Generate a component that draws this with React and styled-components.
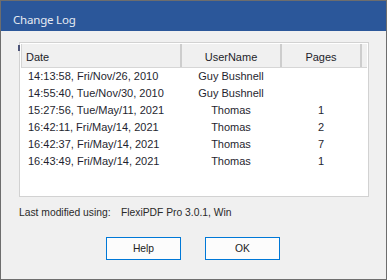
import React from "react";
import styled, { createGlobalStyle } from "styled-components";

const Global = createGlobalStyle`
  html, body { margin: 0; padding: 0; background: #f0f0f0; }
  body { font-family: "Liberation Sans", Arial, sans-serif; }
  * { box-sizing: border-box; }
`;

const Window = styled.div`
  width: 387px;
  height: 280px;
  border: 1px solid #6d6d6d;
  background: #f0f0f0;
  display: flex;
  flex-direction: column;
`;

const TitleBar = styled.div`
  height: 30px;
  flex: none;
  background: #2b579a;
  color: #e6ebf3;
  font-family: "Segoe UI", "Noto Sans", sans-serif;
  font-size: 11.5px;
  letter-spacing: -0.2px;
  line-height: 21px;
  padding: 8px 0 0 12px;
`;

const Body = styled.div`
  padding: 11px 17px 0 18px;
  display: flex;
  flex-direction: column;
`;

const ListBox = styled.div`
  position: relative;
  width: 350px;
  height: 155px;
  border: 1px solid #d2d2d2;
  background: #ffffff;
  padding: 1px;
`;

const FocusMark = styled.span`
  position: absolute;
  left: -2px;
  top: 2px;
  width: 2px;
  height: 6px;
  background: #4d5478;
`;

const HeaderRow = styled.div`
  height: 24px;
  display: grid;
  grid-template-columns: 160px 100px 80px 1fr;
  background: #f0f0f0;
  border-left: 1px solid #d4d4d4;
  border-bottom: 1px solid #d6d6d6;
`;

const HeaderCell = styled.div`
  border-right: ${(p) => (p.$last ? "none" : "2px solid #cdcdcd")};
  padding: 3px 4px 0;
  line-height: 20px;
  font-size: 11px;
  color: #1e1e2a;
  text-align: ${(p) => (p.$center ? "center" : "left")};
  white-space: nowrap;
`;

const Row = styled.div`
  display: grid;
  grid-template-columns: 160px 100px 80px;
  padding-left: 1px;
  height: 17px;
  line-height: 17px;
  font-size: 11px;
  color: #1f1f30;
`;

const Cell = styled.div`
  white-space: nowrap;
  text-align: ${(p) => (p.$center ? "center" : "left")};
  padding-left: ${(p) => (p.$center ? "0" : "6px")};
  padding-right: ${(p) => (p.$center ? "2px" : "0")};
`;

const InfoRow = styled.div`
  margin-top: 9px;
  display: grid;
  grid-template-columns: 102px auto;
  font-size: 10.3px;
  line-height: 14px;
  color: #2a2a2a;
`;

const ButtonRow = styled.div`
  margin-top: 17px;
  padding-right: 2px;
  display: flex;
  justify-content: center;
  gap: 24px;
`;

const Button = styled.button`
  width: 75px;
  height: 23px;
  border: 1px solid #0078d7;
  background: #fcfcfc;
  font-family: "Liberation Sans", Arial, sans-serif;
  font-size: 10.3px;
  color: #222;
  padding: 0;
  margin: 0;
  border-radius: 0;
`;

const rows = [
  ["14:13:58, Fri/Nov/26, 2010", "Guy Bushnell", ""],
  ["14:55:40, Tue/Nov/30, 2010", "Guy Bushnell", ""],
  ["15:27:56, Tue/May/11, 2021", "Thomas", "1"],
  ["16:42:11, Fri/May/14, 2021", "Thomas", "2"],
  ["16:42:37, Fri/May/14, 2021", "Thomas", "7"],
  ["16:43:49, Fri/May/14, 2021", "Thomas", "1"],
];

export default function App() {
  return (
    <>
      <Global />
      <Window>
        <TitleBar>Change Log</TitleBar>
        <Body>
          <ListBox>
            <FocusMark />
            <HeaderRow>
              <HeaderCell>Date</HeaderCell>
              <HeaderCell $center>UserName</HeaderCell>
              <HeaderCell $center>Pages</HeaderCell>
              <HeaderCell $last />
            </HeaderRow>
            {rows.map((r, i) => (
              <Row key={i}>
                <Cell>{r[0]}</Cell>
                <Cell $center>{r[1]}</Cell>
                <Cell $center>{r[2]}</Cell>
              </Row>
            ))}
          </ListBox>
          <InfoRow>
            <span>Last modified using:</span>
            <span>FlexiPDF Pro 3.0.1, Win</span>
          </InfoRow>
          <ButtonRow>
            <Button>Help</Button>
            <Button>OK</Button>
          </ButtonRow>
        </Body>
      </Window>
    </>
  );
}
